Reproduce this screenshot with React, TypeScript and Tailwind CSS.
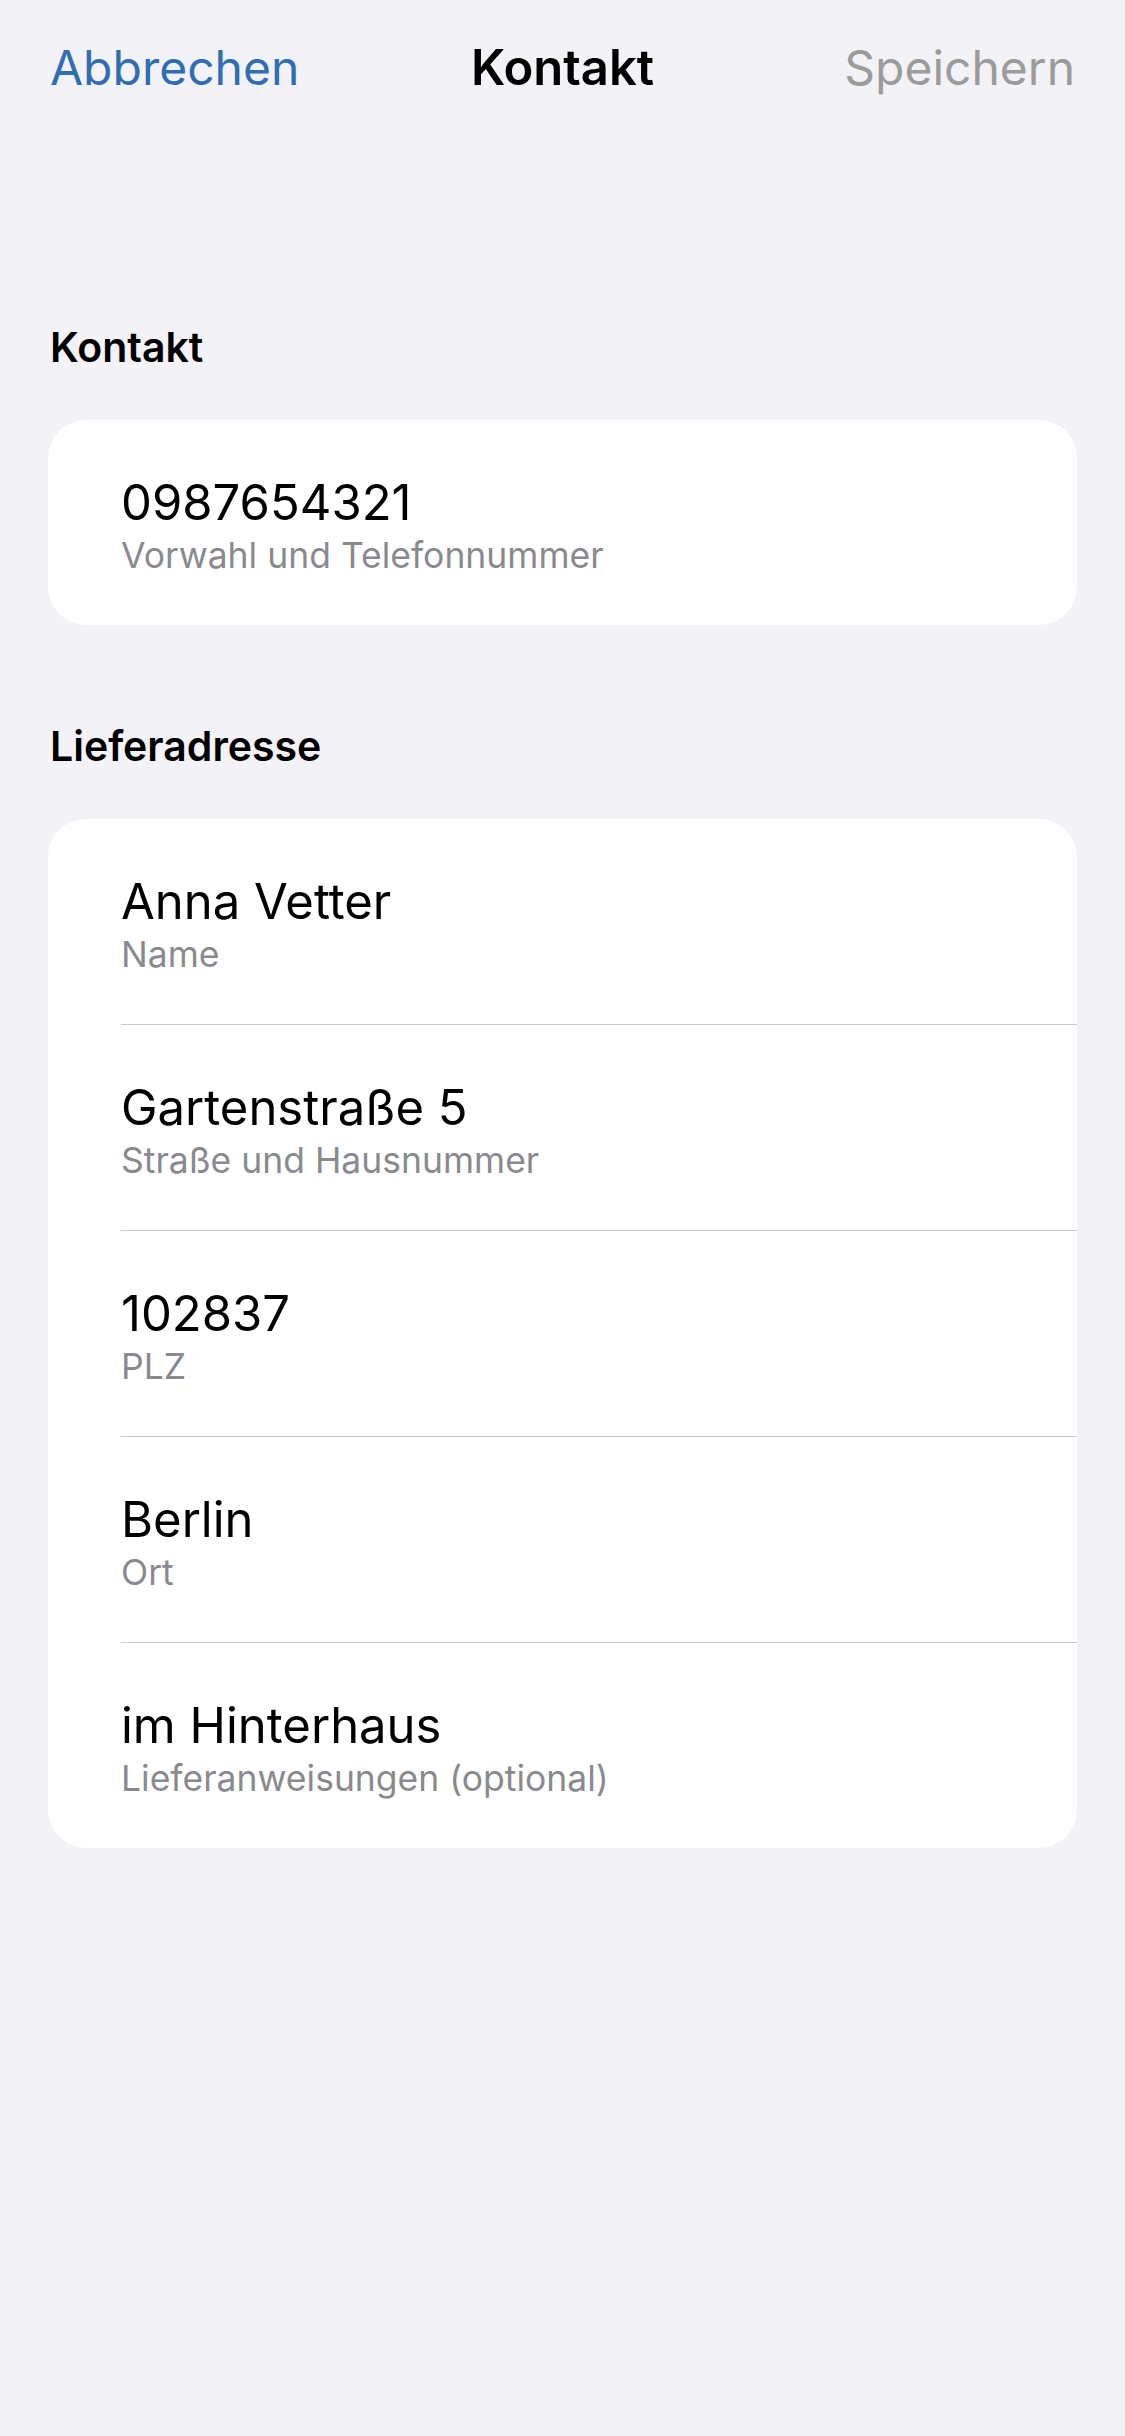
const font = { fontFamily: "Inter, 'Liberation Sans', sans-serif" };

type Field = { value: string; label: string };

const contact: Field[] = [{ value: "0987654321", label: "Vorwahl und Telefonnummer" }];

const address: Field[] = [
  { value: "Anna Vetter", label: "Name" },
  { value: "Gartenstraße 5", label: "Straße und Hausnummer" },
  { value: "102837", label: "PLZ" },
  { value: "Berlin", label: "Ort" },
  { value: "im Hinterhaus", label: "Lieferanweisungen (optional)" },
];

function FieldRow({ field, last }: { field: Field; last: boolean }) {
  return (
    <div className="pl-[73px]">
      <div
        className={`flex flex-col pt-[52px] pb-[47px] ${
          last ? "" : "border-b border-[#c8c8cc]"
        }`}
      >
        <span className="text-[49px] leading-[61px] text-black">{field.value}</span>
        <span className="text-[35.5px] leading-[45px] text-[#8a8a8e]">{field.label}</span>
      </div>
    </div>
  );
}

function Section({ title, fields }: { title: string; fields: Field[] }) {
  return (
    <section className="flex flex-col">
      <h2 className="px-[50px] text-[41px] font-semibold leading-[48px] text-black">
        {title}
      </h2>
      <div className="mx-[48px] mt-[49px] overflow-hidden rounded-[38px] bg-white">
        {fields.map((f, i) => (
          <FieldRow key={f.value} field={f} last={i === fields.length - 1} />
        ))}
      </div>
    </section>
  );
}

export default function App() {
  return (
    <div className="min-h-[2436px] w-[1125px] bg-[#f2f2f7] pt-[37px]" style={font}>
      <header className="grid h-[61px] grid-cols-[1fr_auto_1fr] items-center px-[50px]">
        <button type="button" className="justify-self-start text-[48px] leading-[61px] text-[#2f6db5]">
          Abbrechen
        </button>
        <h1 className="text-[49px] font-semibold leading-[61px] text-black">Kontakt</h1>
        <button type="button" className="justify-self-end text-[48px] leading-[61px] text-[#9b9b9b]">
          Speichern
        </button>
      </header>

      <main className="flex flex-col gap-[97px] pt-[225px]">
        <Section title="Kontakt" fields={contact} />
        <Section title="Lieferadresse" fields={address} />
      </main>
    </div>
  );
}
